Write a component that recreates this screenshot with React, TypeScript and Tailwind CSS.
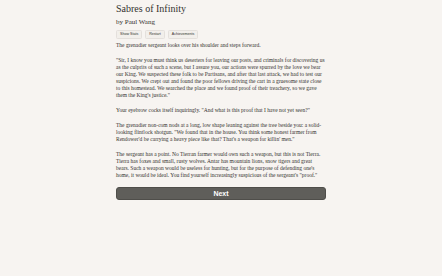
export default function App() {
  return (
    <div className="min-h-[276px] w-full bg-[#f7f4f1] text-[#34322f]" style={{ fontFamily: '"Liberation Serif", "Times New Roman", serif' }}>
      <div className="mx-auto w-[210px] pt-[3px]">
        <h1 className="text-[10px] leading-[12px]">Sabres of Infinity</h1>
        <h2 className="mt-[3px] text-[7px] leading-[9px]">by Paul Wang</h2>
        <div className="mt-[3px] flex gap-[3px] font-['Liberation_Sans',sans-serif] text-[3.6px] leading-[5px]">
          <button className="rounded-[1.5px] border border-[#e4e0dc] bg-[#f2efeb] px-[3px] py-[1px]">Show Stats</button>
          <button className="rounded-[1.5px] border border-[#e4e0dc] bg-[#f2efeb] px-[3px] py-[1px]">Restart</button>
          <button className="rounded-[1.5px] border border-[#e4e0dc] bg-[#f2efeb] px-[3px] py-[1px]">Achievements</button>
        </div>
        <div className="mt-[3px] space-y-[7.5px] text-[5.5px] leading-[7.15px]">
          <p>The grenadier sergeant looks over his shoulder and steps forward.</p>
          <p>
            "Sir, I know you must think us deserters for leaving our posts, and criminals for discovering us as the culprits of such a scene, but I assure you, our actions were spurred by the love we bear our King. We suspected these folk to be Partisans, and after that last attack, we had to test our suspicions. We crept out and found the poor fellows driving the cart in a gruesome state close to this homestead. We searched the place and we found proof of their treachery, so we gave them the King's justice."
          </p>
          <p>Your eyebrow cocks itself inquiringly. "And what is this proof that I have not yet seen?"</p>
          <p>
            The grenadier non-com nods at a long, low shape leaning against the tree beside you: a solid-looking flintlock shotgun. "We found that in the house. You think some honest farmer from Rendower'd be carrying a heavy piece like that? That's a weapon for killin' men."
          </p>
          <p>
            The sergeant has a point. No Tierran farmer would own such a weapon, but this is not Tierra. Tierra has foxes and small, rusty wolves. Antar has mountain lions, snow tigers and great bears. Such a weapon would be useless for hunting, but for the purpose of defending one's home, it would be ideal. You find yourself increasingly suspicious of the sergeant's "proof."
          </p>
        </div>
        <button className="mt-[8px] h-[13px] w-full rounded-[3px] border border-[#4f4e4a] bg-[#5f5e5a] font-['Liberation_Sans',sans-serif] text-[7px] font-bold leading-[11px] text-white">
          Next
        </button>
      </div>
    </div>
  );
}
